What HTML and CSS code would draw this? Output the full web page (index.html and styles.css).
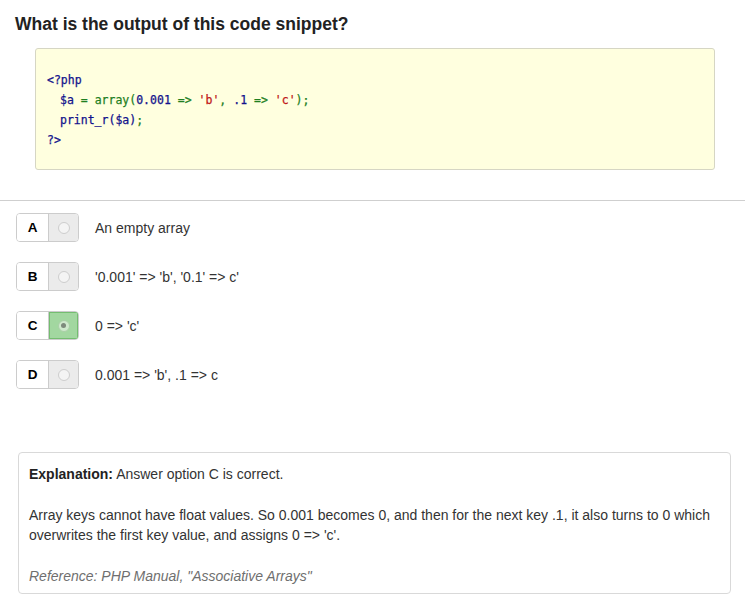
FILE: index.html
```html
<!DOCTYPE html>
<html>
<head>
<meta charset="utf-8">
<link rel="stylesheet" href="styles.css">
</head>
<body>
<div class="question">
  <h1 class="title">What is the output of this code snippet?</h1>
  <div class="code"><div class="ln"><span class="n">&lt;?php</span></div><div class="ln ind"><span class="n">$a</span> <span class="g">= array(</span><span class="n">0.001</span> <span class="g">=&gt;</span> <span class="r">'b'</span><span class="g">,</span> <span class="n">.1</span> <span class="g">=&gt;</span> <span class="r">'c'</span><span class="g">);</span></div><div class="ln ind"><span class="n">print_r($a)</span><span class="g">;</span></div><div class="ln"><span class="n">?&gt;</span></div></div>
</div>
<hr class="rule">
<div class="options">
  <div class="opt">
    <div class="grp"><span class="letter">A</span><span class="radio"><span class="circle"></span></span></div>
    <span class="text">An empty array</span>
  </div>
  <div class="opt">
    <div class="grp"><span class="letter">B</span><span class="radio"><span class="circle"></span></span></div>
    <span class="text">'0.001' =&gt; 'b', '0.1' =&gt; c'</span>
  </div>
  <div class="opt">
    <div class="grp"><span class="letter">C</span><span class="radio on"><span class="circle"><span class="dot"></span></span></span></div>
    <span class="text">0 =&gt; 'c'</span>
  </div>
  <div class="opt">
    <div class="grp"><span class="letter">D</span><span class="radio"><span class="circle"></span></span></div>
    <span class="text">0.001 =&gt; 'b', .1 =&gt; c</span>
  </div>
</div>
<div class="explain">
  <p><b>Explanation:</b> Answer option C is correct.</p>
  <p>Array keys cannot have float values. So 0.001 becomes 0, and then for the next key .1, it also turns to 0 which overwrites the first key value, and assigns 0 =&gt; 'c'.</p>
  <p class="ref">Reference: PHP Manual, "Associative Arrays"</p>
</div>
</body>
</html>
```

FILE: styles.css
```css
* { box-sizing: border-box; }
html, body { margin: 0; padding: 0; background: #fff; }
body {
  font-family: "Liberation Sans", Arial, sans-serif;
  font-size: 14px;
  color: #333;
  width: 753px;
}
.question { padding: 14px 0 0 15px; }
.title {
  margin: 0;
  font-size: 17.5px;
  line-height: 20px;
  font-weight: bold;
  color: #222;
}
.code {
  margin: 14px 0 0 20px;
  width: 680px;
  height: 122px;
  background: #ffffdf;
  border: 1px solid #d6d6c4;
  border-radius: 3px;
  padding: 21px 0 0 11px;
  font-family: "DejaVu Sans Mono", "Liberation Mono", monospace;
  font-size: 11.5px;
  line-height: 20px;
  white-space: pre;
  -webkit-text-stroke: 0.25px currentColor;
}
.ind { padding-left: 13px; }
.n { color: #12128c; }
.g { color: #1f7f1f; }
.r { color: #c01818; }
.rule {
  margin: 30px 8px 0 0;
  border: 0;
  border-top: 1px solid #cfcfcf;
  height: 0;
}
.options {
  padding: 12px 0 0 16px;
  display: flex;
  flex-direction: column;
  gap: 20px;
}
.opt { display: flex; align-items: center; height: 29px; }
.grp {
  display: flex;
  height: 29px;
  border: 1px solid #ccc;
  border-radius: 4px;
  overflow: hidden;
}
.letter {
  width: 32px;
  display: flex;
  align-items: center;
  justify-content: center;
  font-weight: bold;
  font-size: 13.5px;
  color: #000;
  background: #fff;
  border-right: 1px solid #ccc;
}
.radio {
  width: 29px;
  display: flex;
  align-items: center;
  justify-content: center;
  background: #ebebeb;
}
.radio.on { background: #a2d7a0; box-shadow: inset 0 0 0 1px #74bd70; }
.circle {
  width: 12px;
  height: 12px;
  border-radius: 50%;
  background: #f4f4f4;
  border: 1px solid #cdcdcd;
  display: flex;
  align-items: center;
  justify-content: center;
}
.radio.on .circle { background: #cfe9cd; border-color: #a9cfa6; }
.dot { width: 5px; height: 5px; border-radius: 50%; background: #7d8a7c; }
.text { margin-left: 16px; }
.explain {
  margin: 63px 0 0 18px;
  width: 713px;
  border: 1px solid #d9d9d9;
  border-radius: 4px;
  padding: 11px 10px 7px;
  line-height: 20px;
}
.explain p { margin: 0 0 21px; }
.explain p.ref { margin: 0; font-style: italic; color: #6f6f6f; }
.explain b { color: #222; }
```
